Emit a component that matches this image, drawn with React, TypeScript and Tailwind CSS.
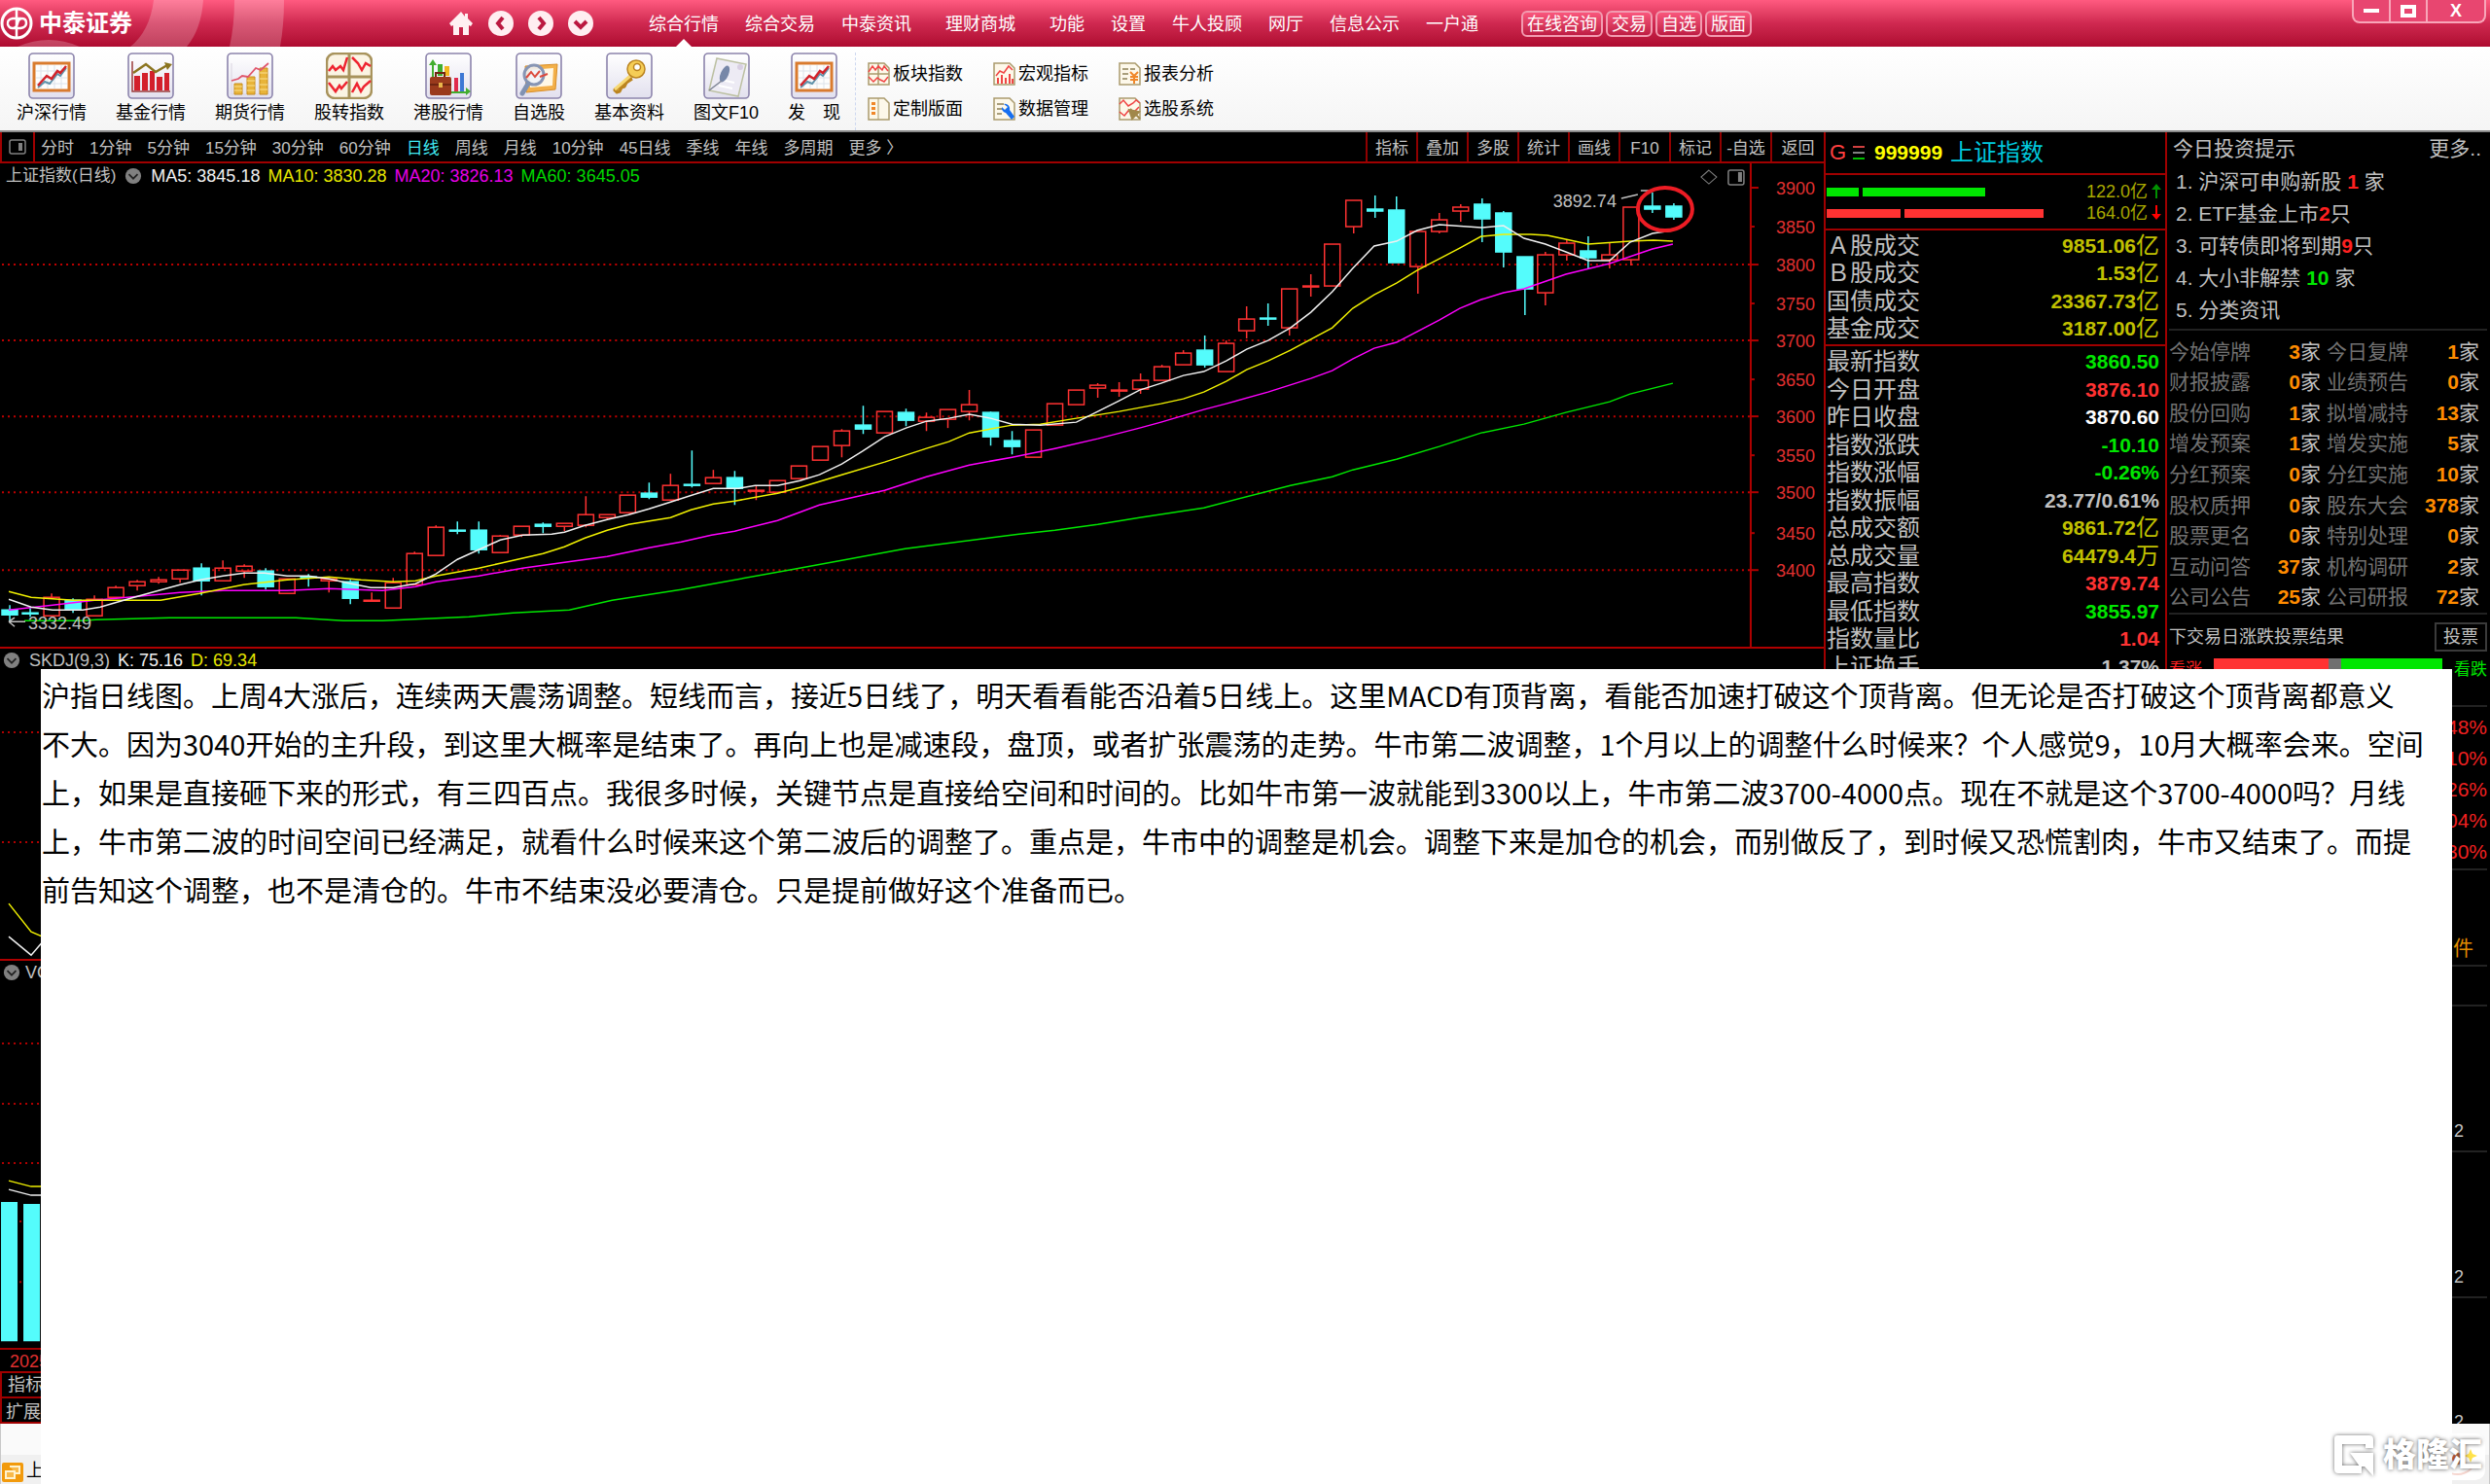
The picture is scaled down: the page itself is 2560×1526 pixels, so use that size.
import type { ReactNode } from "react";

const menus = [
  { name: "综合行情" },
  { name: "综合交易" },
  { name: "中泰资讯", wide: true },
  { name: "理财商城", wide: true },
  { name: "功能" },
  { name: "设置" },
  { name: "牛人投顾" },
  { name: "网厅" },
  { name: "信息公示" },
  { name: "一户通" },
];

const periods = ["分时", "1分钟", "5分钟", "15分钟", "30分钟", "60分钟", "日线", "周线", "月线", "10分钟", "45日线", "季线", "年线", "多周期", "更多 〉"];
const tools = ["指标", "叠加", "多股", "统计", "画线", "F10", "标记", "-自选", "返回"];

// [up, high, body top, body bottom, low]
const candles: [number, number, number, number, number][] = [
  [0, 454, 459, 464, 471], [0, 457, 462, 463, 466], [1, 442, 446, 465, 465], [0, 447, 449, 458, 462],
  [1, 444, 448, 465, 465], [1, 434, 436, 446, 446], [1, 428, 430, 434, 439], [1, 425, 428, 430, 432],
  [1, 418, 418, 427, 431], [0, 411, 416, 429, 444], [1, 408, 416, 429, 429], [1, 412, 414, 419, 426],
  [0, 416, 419, 435, 438], [1, 427, 427, 442, 442], [0, 422, 425, 426, 435], [1, 427, 427, 429, 441],
  [0, 428, 430, 447, 453], [1, 441, 449, 450, 450], [1, 426, 431, 457, 457], [1, 399, 401, 433, 433],
  [1, 372, 374, 403, 403], [0, 368, 377, 378, 381], [0, 368, 377, 397, 401], [1, 382, 383, 400, 400],
  [1, 373, 373, 382, 384], [0, 369, 371, 373, 380], [1, 370, 370, 373, 378], [1, 342, 361, 372, 374],
  [1, 361, 361, 364, 366], [1, 341, 341, 359, 359], [0, 328, 339, 343, 345], [1, 319, 331, 346, 346],
  [0, 295, 330, 331, 333], [1, 315, 323, 329, 329], [0, 316, 323, 334, 351], [1, 331, 336, 337, 346],
  [1, 326, 326, 338, 338], [1, 311, 311, 324, 324], [1, 291, 291, 305, 305], [1, 273, 275, 290, 302],
  [0, 249, 269, 273, 278], [1, 255, 255, 277, 277], [0, 252, 256, 264, 270], [1, 256, 261, 265, 275],
  [1, 253, 253, 263, 272], [1, 233, 248, 255, 264], [0, 255, 256, 281, 290], [0, 275, 285, 291, 299],
  [1, 274, 274, 302, 302], [1, 247, 247, 269, 269], [1, 233, 233, 248, 248], [1, 226, 228, 231, 241],
  [1, 225, 233, 234, 240], [1, 216, 223, 232, 237], [1, 207, 209, 223, 223], [1, 192, 195, 207, 207],
  [0, 177, 192, 207, 210], [1, 182, 185, 214, 214], [1, 147, 160, 172, 180], [0, 144, 159, 160, 167],
  [1, 129, 129, 169, 177], [1, 114, 126, 127, 137], [1, 83, 83, 126, 126], [1, 38, 38, 65, 72],
  [0, 33, 47, 49, 56], [0, 34, 48, 102, 102], [1, 70, 70, 106, 134], [1, 51, 58, 70, 72],
  [1, 42, 45, 49, 60], [0, 36, 42, 57, 81], [0, 49, 51, 91, 107], [0, 96, 96, 129, 156],
  [1, 91, 94, 133, 146], [1, 79, 82, 94, 100], [0, 75, 90, 97, 109], [1, 82, 94, 99, 108],
  [1, 45, 45, 99, 105], [0, 30, 44, 47, 51], [0, 41, 44, 55, 58],
];

const ma5 = "9,448 32,456 54,459 85,459 103,456 134,447 163,439 185,433 206,428 229,424 251,421 272,421 295,424 317,424 338,427 361,432 381,436 404,436 427,432 448,422 470,407 492,397 514,387 537,382 567,381 580,379 601,372 624,366 646,361 667,355 689,348 733,334 759,334 776,331 799,331 822,326 842,320 865,309 886,296 909,281 931,272 952,265 975,262 996,258 1018,262 1040,268 1069,269 1106,266 1128,255 1150,244 1171,233 1193,226 1216,218 1237,214 1260,203 1281,191 1303,182 1326,169 1347,153 1369,132 1390,108 1412,85 1435,80 1456,69 1479,63 1522,66 1545,64 1566,77 1588,83 1609,91 1632,100 1654,100 1675,81 1698,72 1719,69";
const ma10 = "9,440 32,446 76,449 165,449 205,442 250,433 295,428 338,425 371,428 404,430 427,429 448,424 492,416 514,411 558,401 580,394 601,385 624,377 646,371 689,364 710,356 733,350 755,347 799,339 822,333 865,320 909,307 952,293 975,286 996,277 1040,269 1069,268 1106,262 1150,255 1193,247 1216,242 1237,235 1260,224 1281,212 1303,203 1326,192 1369,169 1390,149 1412,135 1435,123 1456,110 1500,87 1522,75 1545,73 1573,73 1590,74 1632,83 1675,80 1699,79 1719,80";
const ma20 = "9,459 54,454 97,449 142,445 185,441 229,439 295,439 338,437 393,439 427,435 448,430 492,424 537,416 580,410 624,404 667,395 700,389 731,382 755,378 799,367 842,351 909,336 952,322 996,310 1040,302 1084,293 1128,283 1171,272 1193,266 1237,253 1260,247 1303,235 1347,221 1369,213 1390,201 1412,190 1435,184 1456,173 1479,161 1500,149 1522,140 1545,133 1566,129 1609,114 1654,103 1698,88 1719,83";
const ma60 = "25,470 85,470 98,469 174,467 304,467 353,470 393,470 437,468 482,466 527,462 585,459 629,449 700,438 816,417 930,396 1047,381 1084,377 1128,371 1171,364 1237,354 1326,331 1369,322 1390,315 1435,304 1479,291 1522,277 1566,268 1609,256 1654,245 1675,237 1719,226";

const axis: [string, number][] = [
  ["3900", 25], ["3850", 65], ["3800", 104], ["3750", 144], ["3700", 182], ["3650", 222],
  ["3600", 260], ["3550", 300], ["3500", 338], ["3450", 380], ["3400", 418],
];

const turnover = [
  ["Ａ股成交", "9851.06", "亿"],
  ["Ｂ股成交", "1.53", "亿"],
  ["国债成交", "23367.73", "亿"],
  ["基金成交", "3187.00", "亿"],
];

const quotes = [
  ["最新指数", "3860.50", "", "text-[#00e600]"],
  ["今日开盘", "3876.10", "", "text-[#ff3232]"],
  ["昨日收盘", "3870.60", "", "text-white"],
  ["指数涨跌", "-10.10", "", "text-[#00e600]"],
  ["指数涨幅", "-0.26%", "", "text-[#00e600]"],
  ["指数振幅", "23.77/0.61%", "", "text-[#c0c0c0]"],
  ["总成交额", "9861.72", "亿", "text-[#c0c000]"],
  ["总成交量", "64479.4", "万", "text-[#c0c000]"],
  ["最高指数", "3879.74", "", "text-[#ff3232]"],
  ["最低指数", "3855.97", "", "text-[#00e600]"],
  ["指数量比", "1.04", "", "text-[#ff3232]"],
  ["上证换手", "1.37%", "", "text-[#c0c0c0]"],
];

const events = [
  ["今始停牌", "3", "今日复牌", "1"],
  ["财报披露", "0", "业绩预告", "0"],
  ["股份回购", "1", "拟增减持", "13"],
  ["增发预案", "1", "增发实施", "5"],
  ["分红预案", "0", "分红实施", "10"],
  ["股权质押", "0", "股东大会", "378"],
  ["股票更名", "0", "特别处理", "0"],
  ["互动问答", "37", "机构调研", "2"],
  ["公司公告", "25", "公司研报", "72"],
];

const note = [
  "沪指日线图。上周4大涨后，连续两天震荡调整。短线而言，接近5日线了，明天看看能否沿着5日线上。这里MACD有顶背离，看能否加速打破这个顶背离。但无论是否打破这个顶背离都意义",
  "不大。因为3040开始的主升段，到这里大概率是结束了。再向上也是减速段，盘顶，或者扩张震荡的走势。牛市第二波调整，1个月以上的调整什么时候来？个人感觉9，10月大概率会来。空间",
  "上，如果是直接砸下来的形式，有三四百点。我很多时候，关键节点是直接给空间和时间的。比如牛市第一波就能到3300以上，牛市第二波3700-4000点。现在不就是这个3700-4000吗？月线",
  "上，牛市第二波的时间空间已经满足，就看什么时候来这个第二波后的调整了。重点是，牛市中的调整是机会。调整下来是加仓的机会，而别做反了，到时候又恐慌割肉，牛市又结束了。而提",
  "前告知这个调整，也不是清仓的。牛市不结束没必要清仓。只是提前做好这个准备而已。",
];

function Tile({ children }: { children: ReactNode }) {
  return (
    <svg viewBox="0 0 48 48" className="h-12 w-12">
      <defs>
        <linearGradient id="tile" x1="0" y1="0" x2="0" y2="1">
          <stop offset="0" stopColor="#fff" />
          <stop offset="1" stopColor="#e2e0ee" />
        </linearGradient>
      </defs>
      <rect x="1" y="1" width="46" height="46" rx="4" fill="url(#tile)" stroke="#8c84ac" strokeWidth="1.6" />
      {children}
    </svg>
  );
}

const framedChart = (
  <Tile>
    <rect x="6" y="11" width="36" height="28" fill="#fdfdfd" stroke="#d97b2e" strokeWidth="3" />
    <path d="M13 13v24M20 13v24M27 13v24M34 13v24M8 19h32M8 26h32M8 32h32" stroke="#dde3ea" />
    <path d="M10 36l7-6 5 2 8-10 3 2 6-8" fill="none" stroke="#5f93ab" strokeWidth="2" />
    <path d="M10 34l9-10 5 3 6-8 3 2 6-7" fill="none" stroke="#d2232a" strokeWidth="2.5" />
  </Tile>
);

const apps: { name: string; icon: ReactNode }[] = [
  { name: "沪深行情", icon: framedChart },
  {
    name: "基金行情",
    icon: (
      <Tile>
        <path d="M5 9v31h39" fill="none" stroke="#9b3b3b" strokeWidth="1.5" />
        <path d="M7 24h6v15H7zM15 21h6v18h-6zM23 19h5v20h-5zM30 25h6v14h-6zM38 21h5v18h-5z" fill="#d3202c" />
        <path d="M6 21l13-9 10 8 12-7" fill="none" stroke="#8b7420" strokeWidth="2.5" />
        <path d="M38 10l8 2-5 6z" fill="#8b7420" />
      </Tile>
    ),
  },
  {
    name: "期货行情",
    icon: (
      <Tile>
        <path d="M5 11v32h38" fill="none" stroke="#d9d4df" />
        <path d="M8 32h8v11H8zM21 25h8v18h-8zM34 16h8v27h-8z" fill="#e8b43a" stroke="#c88d1c" />
        <path d="M8 35h8M8 39h8M21 29h8M21 34h8M21 39h8M34 21h8M34 27h8M34 33h8M34 38h8" stroke="#fbe08e" />
        <path d="M5 29l7-2 4-3 6 1 8-9 5 2 8-7" fill="none" stroke="#e0566c" strokeWidth="1.8" />
      </Tile>
    ),
  },
  {
    name: "股转指数",
    icon: (
      <svg viewBox="0 0 48 48" className="h-12 w-12">
        <rect x="1" y="1" width="46" height="46" rx="8" fill="#fbf4e4" stroke="#a8935c" strokeWidth="2.5" />
        <path d="M24 1v46M1 25h46" stroke="#a8935c" strokeWidth="3" />
        <path d="M3 19l4-5 3 4 5-4 3 4 4-13M27 5l6 6 4 7 4-7 5 3M3 31l7 9 4-6 2 3 6-7M27 41l5-9 4 8 3-5 7-6" fill="none" stroke="#ee2430" strokeWidth="2.5" />
      </svg>
    ),
  },
  {
    name: "港股行情",
    icon: (
      <Tile>
        <path d="M8 44V10" stroke="#42ad2e" strokeWidth="2" />
        <path d="M4 13l4-6 4 6zM42 36l5 4-5 4z" fill="#42ad2e" />
        <path d="M13 12h5v12h-5z" fill="#3fae30" />
        <path d="M20 14h5v10h-5z" fill="#f2b51e" />
        <path d="M30 26h4v15h-4z" fill="#e02a4c" />
        <path d="M36 21h4v20h-4z" fill="#3d78d4" />
        <path d="M27 41h16" stroke="#42ad2e" strokeWidth="2" />
        <rect x="5" y="25" width="22" height="19" rx="2" fill="#9a3a1c" />
        <path d="M11 25v-4h9v4M5 33h22" fill="none" stroke="#6f2611" strokeWidth="2" />
        <path d="M14 31h4v5h-4z" fill="#e9b54a" />
      </Tile>
    ),
  },
  {
    name: "自选股",
    icon: (
      <Tile>
        <path d="M10 14l33-2-2 26-30 3z" fill="#f3b04a" stroke="#d98e27" />
        <path d="M14 18l25-2-1 18-23 2z" fill="#fff8e6" />
        <circle cx="19" cy="23" r="10" fill="#eef3fb" fillOpacity=".85" stroke="#8795b4" strokeWidth="3" />
        <path d="M11 26l5-6 4 5 5-6M25 25l8-3" fill="none" stroke="#dc4b3e" strokeWidth="2" />
        <path d="M13 32L7 42" stroke="#8192b2" strokeWidth="5" strokeLinecap="round" />
      </Tile>
    ),
  },
  {
    name: "基本资料",
    icon: (
      <Tile>
        <path d="M26 25L9 39v-1l2 3 3-1 2-4 3-1 2-4 6-4" fill="#f1c141" stroke="#bb8420" strokeWidth="3" strokeLinejoin="round" />
        <path d="M25 24L9 38" stroke="#f7d873" strokeWidth="3" />
        <circle cx="31" cy="17" r="9" fill="#f5cd56" stroke="#bb8420" strokeWidth="1.5" />
        <circle cx="32" cy="15" r="3.5" fill="#fff" stroke="#bb8420" strokeWidth="1.5" />
      </Tile>
    ),
  },
  {
    name: "图文F10",
    icon: (
      <Tile>
        <path d="M14 6l30 6-8 33-30-6z" fill="#edebf4" stroke="#bcc0a2" strokeWidth="1.5" />
        <path d="M18 28l14 3M16 34l14 3" stroke="#fff" strokeWidth="2" />
        <ellipse cx="22" cy="22" rx="4" ry="9" transform="rotate(24 22 22)" fill="#7787a8" />
        <path d="M19 29L6 39" stroke="#7e8494" strokeWidth="1.5" />
        <circle cx="38" cy="15" r="3" fill="#d8cfe2" />
      </Tile>
    ),
  },
  { name: "发　现", icon: framedChart },
];

function MiniBase({ children }: { children: ReactNode }) {
  return (
    <svg viewBox="0 0 24 24" className="h-6 w-6">
      <path d="M2 1h16l5 5v17H2z" fill="#fdf8ea" stroke="#ab9b6d" strokeWidth="1.5" />
      {children}
    </svg>
  );
}

const links: { name: string; icon: ReactNode }[] = [
  { name: "板块指数", icon: <MiniBase><path d="M12 1v22M2 12h21" stroke="#ab9b6d" strokeWidth="1.5" /><path d="M2 10l4-6 3 4 3-4 4 4 2-4 4 5M2 15l5 5 4-4 3 2 4 2 4-5" fill="none" stroke="#f04545" strokeWidth="1.5" /></MiniBase> },
  { name: "宏观指标", icon: <MiniBase><path d="M4 14l4-5 4 2 5-7 4 4" fill="none" stroke="#f04545" strokeWidth="1.5" /><path d="M6 22v-6M10 22v-9M14 22v-6M18 22V12M21 22v-5" stroke="#f04545" strokeWidth="2" /></MiniBase> },
  { name: "报表分析", icon: <MiniBase><path d="M5 7h6M13 7h5M5 12h6M5 17h5" stroke="#8d8057" strokeWidth="1.5" /><path d="M13 10l4 4 4-4M17 14v8M13 15h8M13 18h8" fill="none" stroke="#f0872a" strokeWidth="2" /></MiniBase> },
  { name: "定制版面", icon: <MiniBase><path d="M12 1v22" stroke="#ab9b6d" /><path d="M5 5h4v3H5zM5 10h4v3H5zM5 15h4v3H5z" fill="#f0872a" /></MiniBase> },
  { name: "数据管理", icon: <MiniBase><path d="M5 7h7M5 12h6M5 17h5" stroke="#8d8057" strokeWidth="1.5" /><path d="M12 7a5 5 0 0 1 6 6l5 7-3 3-6-7a5 5 0 0 1-4-6l3 3 3-3z" fill="#176ff0" /></MiniBase> },
  { name: "选股系统", icon: <MiniBase><path d="M2 7l4-4 5 6 5-3 3-3 4 3M2 15l5 4 4-5 5 2 6-6" fill="none" stroke="#f04545" strokeWidth="1.5" /><path d="M13 12l10 10M12 13l3 9 7-7z" stroke="#a1884a" strokeWidth="2" fill="#a1884a" /></MiniBase> },
];

function Fold() {
  return (
    <svg viewBox="0 0 20 20" className="h-[18px] w-5">
      <circle cx="10" cy="10" r="9" fill="#808080" />
      <path d="M5 8l5 5 5-5" fill="none" stroke="#222" strokeWidth="2" />
    </svg>
  );
}

function SidePanelIcon() {
  return (
    <svg viewBox="0 0 18 16" className="h-4 w-[18px]">
      <rect x="1" y="1" width="16" height="14" rx="2" fill="none" stroke="#808080" strokeWidth="1.5" />
      <path d="M10 4h4v8h-4z" fill="#808080" />
    </svg>
  );
}

function TitleBar() {
  return (
    <header className="relative flex h-12 items-center bg-linear-to-b from-[#ff5a80] via-[#cf2850] to-[#ae0a30] text-lg text-white">
      <svg viewBox="0 0 300 48" className="absolute left-0 top-0 h-12 w-[300px]">
        <path d="M158 0h51q-2 30-17 48h-58q20-16 24-48zM241 0h51q0 26-4 48h-52q5-22 5-48zM18 48q32-14 64 0z" fill="#fff" fillOpacity=".22" />
      </svg>
      <div className="relative flex w-[460px] items-center gap-1.5">
        <svg viewBox="0 0 34 34" className="h-[34px] w-[34px]">
          <g fill="none" stroke="#fff" strokeWidth="3">
            <circle cx="17" cy="17" r="15" />
            <path d="M17 2v30M22 12h-9q-6 1-5 6 1 4 5 4 4 0 5-5t5-5q4 0 4 5 0 4-6 5h-6" strokeWidth="2.5" />
          </g>
        </svg>
        <h1 className="text-2xl font-bold">中泰证券</h1>
      </div>
      <nav className="flex w-[207px] items-center gap-[13px]">
        <button aria-label="主页">
          <svg viewBox="0 0 28 28" className="h-7 w-7">
            <path d="M14 2L2 14l2 3 2-1v10h6v-8h4v8h6V16l2 1 2-3-5-5V4h-3v3z" fill="#fff0f2" />
          </svg>
        </button>
        {["M16 8l-5 6 5 6", "M12 8l5 6-5 6", "M8 12l6 6 6-6"].map((d, i) => (
          <button key={d} aria-label={["后退", "前进", "展开"][i]}>
            <svg viewBox="0 0 28 28" className="h-7 w-7">
              <circle cx="14" cy="14" r="13" fill="#ffeef1" />
              <path d={d} fill="none" stroke="#bb1840" strokeWidth="4" />
            </svg>
          </button>
        ))}
      </nav>
      <nav className="flex gap-[27px]">
        {menus.map((m, i) => (
          <button key={m.name} className={`relative flex h-12 items-center pt-0.5 ${m.wide ? "mr-2" : ""}`}>
            {m.name}
            {i === 0 && <span className="absolute bottom-0 left-1/2 h-0 w-0 -translate-x-1/2 border-x-8 border-b-8 border-x-transparent border-b-white" />}
          </button>
        ))}
      </nav>
      <div className="ml-11 flex gap-[3px]">
        {["在线咨询", "交易", "自选", "版面"].map((t) => (
          <button key={t} className="h-[27px] rounded-md border-2 border-[#f29bb0] bg-linear-to-b from-[#f9567c] to-[#bf1c44] px-1 leading-6">{t}</button>
        ))}
      </div>
      <div className="ml-auto mr-1 flex self-start rounded-b-lg border-2 border-t-0 border-[#f8a6b9] bg-[#e84670]">
        <button aria-label="最小化" className="flex h-[22px] w-9 items-center justify-center">
          <span className="h-1 w-4 bg-white" />
        </button>
        <button aria-label="还原" className="flex h-[22px] w-10 items-center justify-center border-x-2 border-[#f8a6b9]">
          <span className="h-[13px] w-4 border-4 border-white" />
        </button>
        <button aria-label="关闭" className="h-[22px] w-[58px] text-lg font-bold leading-5">X</button>
      </div>
    </header>
  );
}

function Toolbar() {
  return (
    <div className="flex h-[88px] border-b-2 border-[#8a8a8a] bg-linear-to-b from-white to-[#f5f5f5] text-lg text-black">
      <div className="flex pl-0.5 pt-1.5">
        {apps.map((a) => (
          <button key={a.name} className="flex flex-col items-center px-[15px]">
            {a.icon}
            <span className="leading-7">{a.name}</span>
          </button>
        ))}
      </div>
      <div className="mt-1.5 grid grid-cols-3 content-center gap-x-[30px] gap-y-2 border-l border-dashed border-[#cdd8f0] pl-[11px]">
        {links.map((l) => (
          <button key={l.name} className="flex items-center gap-[3px] leading-7">
            {l.icon}
            {l.name}
          </button>
        ))}
      </div>
    </div>
  );
}

function PeriodBar() {
  return (
    <div className="flex h-8 border-b-2 border-[#a00000] text-[17px] text-[#c0c0c0]">
      <button aria-label="侧栏" className="flex w-9 items-center justify-center border-x-2 border-[#a00000]"><SidePanelIcon /></button>
      <div className="flex items-center gap-4 pl-1.5 pt-1">
        {periods.map((p) => (
          <button key={p} className={p === "日线" ? "text-[#40e8f0]" : ""}>{p}</button>
        ))}
      </div>
      <div className="ml-auto flex">
        {tools.map((t) => (
          <button key={t} className="w-[52px] border-l-2 border-[#900000] pt-1 last:w-[55px]">{t}</button>
        ))}
      </div>
    </div>
  );
}

function KLine() {
  return (
    <div className="relative">
      <svg viewBox="0 0 1874 497" className="block w-full font-['Liberation_Sans',sans-serif]">
        <g stroke="#c00000" strokeWidth="2" strokeDasharray="2 4">
          {[104, 182, 260, 338, 418].map((y) => (
            <path key={y} d={`M2 ${y}H1798`} />
          ))}
        </g>
        <path d="M1799 0V497" stroke="#b00000" strokeWidth="2" />
        {axis.map(([t, y], i) => (
          <g key={t}>
            <path d={`M1799 ${y}h${i % 2 ? 4 : 8}`} stroke="#b00000" strokeWidth="2" />
            <text x="1825" y={y + 7} fontSize="18" fill="#e03030">{t}</text>
          </g>
        ))}
        {candles.map(([up, hi, top, bot, lo], i) => {
          const x = Math.round(9.5 + i * 21.93);
          const color = up ? "#ff3232" : "#54fcfc";
          return (
            <g key={i} stroke={color} strokeWidth="1.5">
              <path d={`M${x} ${hi}V${top}M${x} ${bot}V${lo}`} />
              <rect x={x - 8} y={top} width="16" height={bot - top} fill={up ? "none" : color} />
            </g>
          );
        })}
        <g fill="none" strokeWidth="1.5">
          <polyline points={ma60} stroke="#00e600" />
          <polyline points={ma20} stroke="#ff00ff" />
          <polyline points={ma10} stroke="#f0f000" />
          <polyline points={ma5} stroke="#f0f0f0" />
          <path d="M9 471h17M9 471l6-4M9 471l6 5M1666 36l17-4M1686 28h8" stroke="#c0c0c0" />
        </g>
        <text x="29" y="479" fontSize="18" fill="#c0c0c0">3332.49</text>
        <text x="1596" y="45" fontSize="18" fill="#c0c0c0">3892.74</text>
        <ellipse cx="1711" cy="47" rx="28" ry="22" fill="none" stroke="#ed1c24" strokeWidth="4" />
        <path d="M1756 7l8 7-8 7-8-7z" fill="none" stroke="#808080" />
        <rect x="1776" y="7" width="16" height="15" rx="2" fill="none" stroke="#808080" strokeWidth="1.5" />
        <path d="M1786 9h4v10h-4z" fill="#808080" />
      </svg>
      <div className="absolute left-1.5 top-0 flex h-[26px] items-center gap-2 text-lg">
        <span className="text-[17px] text-[#c0c0c0]">上证指数(日线)</span>
        <Fold />
        <span className="text-[#f0f0f0]">MA5: 3845.18</span>
        <span className="text-[#e6e600]">MA10: 3830.28</span>
        <span className="text-[#e600e6]">MA20: 3826.13</span>
        <span className="text-[#00d800]">MA60: 3645.05</span>
      </div>
    </div>
  );
}

function IndexPanel() {
  return (
    <section className="w-[353px] shrink-0 border-x-2 border-[#a00000] text-2xl text-[#c0c0c0]">
      <div className="flex h-11 items-center border-b-2 border-[#a00000] pl-1">
        <span className="w-6 text-[22px] text-[#ff4040]">G</span>
        <span className="mr-2.5 flex w-3 flex-col gap-1">
          <i className="h-0.5 bg-[#d04040]" />
          <i className="h-0.5 bg-[#808080]" />
          <i className="h-0.5 bg-[#00c000]" />
        </span>
        <b className="text-[21px] text-[#ffff00]">999999</b>
        <span className="pl-2 text-[#00c8dc]">上证指数</span>
      </div>
      <div className="h-[57px] border-b-2 border-[#a00000] py-1.5 pl-px pr-1 text-lg text-[#a8a800]">
        <div className="flex h-[22px] items-center gap-1">
          <i className="h-[9px] w-[33px] bg-[#00e600]" />
          <i className="h-[9px] w-[126px] bg-[#00e600]" />
          <span className="ml-auto">122.0亿</span>
          <svg viewBox="0 0 10 16" className="h-4 w-2.5"><path d="M5 0L0 6h4v9h2V6h4z" fill="#009000" /></svg>
        </div>
        <div className="flex h-[22px] items-center gap-1">
          <i className="h-[9px] w-[76px] bg-[#ff3232]" />
          <i className="h-[9px] w-[143px] bg-[#ff3232]" />
          <span className="ml-auto">164.0亿</span>
          <svg viewBox="0 0 10 16" className="h-4 w-2.5"><path d="M5 15L0 9h4V0h2v9h4z" fill="#ff0000" /></svg>
        </div>
      </div>
      <dl className="flex h-[119px] flex-col border-b-2 border-[#a00000] py-0.5 pl-px pr-1.5">
        {turnover.map(([name, value, unit]) => (
          <div key={name} className="flex flex-1 items-center justify-between leading-7">
            <dt>{name}</dt>
            <dd className="flex items-center text-[#c0c000]"><b className="text-[21px]">{value}</b>{unit}</dd>
          </div>
        ))}
      </dl>
      <dl className="flex h-[344px] flex-col pl-px pr-1.5 pt-0.5">
        {quotes.map(([name, value, unit, color]) => (
          <div key={name} className="flex flex-1 items-center justify-between leading-7">
            <dt>{name}</dt>
            <dd className={`flex items-center ${color}`}><b className="text-[21px]">{value}</b>{unit}</dd>
          </div>
        ))}
      </dl>
    </section>
  );
}

function InfoPanel() {
  return (
    <aside className="flex w-[332px] shrink-0 flex-col pl-0.5 pr-[3px] text-[21px] text-[#c0c0c0]">
      <div className="flex h-[34px] items-center justify-between pl-1 pr-1.5">
        <h2>今日投资提示</h2>
        <a href="#more">更多..</a>
      </div>
      <ol className="border-b-2 border-[#222] pb-[3px] pl-[7px] leading-[33px]">
        <li>1. 沪深可申购新股 <b className="text-[#ff2020]">1</b> 家</li>
        <li>2. ETF基金上市<b className="text-[#ff2020]">2</b>只</li>
        <li>3. 可转债即将到期<b className="text-[#ff2020]">9</b>只</li>
        <li>4. 大小非解禁 <b className="text-[#00e600]">10</b> 家</li>
        <li>5. 分类资讯</li>
      </ol>
      <div className="h-[292px] border-b-2 border-[#222] pt-1.5">
        <table className="h-[284px] w-full leading-7">
          <tbody>
            {events.map(([a, x, b, y]) => (
              <tr key={a}>
                <td className="w-[84px] whitespace-nowrap text-[#707070]">{a}</td>
                <td className="w-[72px] text-right"><b className="text-[#ff8c00]">{x}</b>家</td>
                <td className="w-[90px] whitespace-nowrap pl-1.5 text-[#707070]">{b}</td>
                <td className="whitespace-nowrap pr-2 text-right"><b className="text-[#ff8c00]">{y}</b>家</td>
              </tr>
            ))}
          </tbody>
        </table>
      </div>
      <div className="flex h-[45px] items-center justify-between text-lg">
        下交易日涨跌投票结果
        <button className="h-[30px] w-[54px] border-2 border-[#3a3a3a] leading-6">投票</button>
      </div>
      <div className="flex h-5 items-start gap-3 text-[17px] leading-6">
        <span className="text-[#ff2020]">看涨</span>
        <span className="flex h-4 flex-1">
          <i className="w-1/2 bg-[#ff3232]" />
          <i className="w-[13px] bg-[#707070]" />
          <i className="flex-1 bg-[#00e600]" />
        </span>
        <span className="text-[#00e600]">看跌</span>
      </div>
      <div className="mt-7 flex h-[170px] flex-col justify-center border-y-2 border-[#222] pt-1 text-right leading-8 text-[#f02020]">
        {["48%", "10%", "26%", "04%", "30%"].map((p) => (
          <span key={p}>{p}</span>
        ))}
      </div>
      <div className="flex h-[99px] items-end justify-end border-b-2 border-[#222] pb-0.5 pr-3.5 text-[#e08c00]">件</div>
      <div className="h-[41px] border-b-2 border-[#222]" />
      <div className="flex h-[150px] items-end justify-end border-b-2 border-[#222] pb-2 pr-6 text-lg leading-6">2</div>
      <div className="flex h-[150px] items-end justify-end border-b-2 border-[#222] pb-2 pr-6 text-lg leading-6">2</div>
      <div className="-mb-2 flex h-[137px] items-end justify-end pr-6 text-lg leading-5">2</div>
    </aside>
  );
}

function Watermark() {
  return (
    <div className="absolute bottom-2 right-2 flex items-center gap-2 text-[34px] font-black leading-10 text-white text-shadow-[0_0_4px_#555]">
      <svg viewBox="0 0 44 44" className="h-11 w-11 overflow-visible drop-shadow-[0_0_2px_#666]">
        <path d="M5 2h33q4 0 4 4v9h-8v-4H10v22h20v8H6q-4 0-4-4V5q0-3 3-3z" fill="#fff" />
        <path d="M18 20h24v24l-9-10h-5z" fill="#fff" />
      </svg>
      格隆汇
    </div>
  );
}

export default function App() {
  return (
    <div className="relative flex min-h-screen flex-col overflow-hidden bg-black font-['Liberation_Sans','Noto_Sans_CJK_SC',sans-serif]">
      <TitleBar />
      <Toolbar />
      <main className="flex flex-1">
        <div className="flex min-w-0 flex-1 flex-col">
          <PeriodBar />
          <KLine />
          <section className="h-[321px] border-t-2 border-[#b00000]">
            <div className="flex h-6 items-center gap-2 pl-0.5 text-lg leading-6 text-[#c0c0c0]">
              <Fold />
              <span>SKDJ(9,3)</span>
              <span className="text-[#f0f0f0]">K: 75.16</span>
              <span className="text-[#e6e600]">D: 69.34</span>
            </div>
            <svg viewBox="0 0 1874 295" className="block w-full" fill="none">
              <path d="M2 62H1798M2 175H1798" stroke="#b00000" strokeWidth="2" strokeDasharray="2 4" />
              <path d="M9 238l23 29 28 12" stroke="#f0f000" strokeWidth="1.5" />
              <path d="M9 272l23 19 24-28" stroke="#f0f0f0" strokeWidth="1.5" />
            </svg>
          </section>
          <section className="flex-1 border-t-2 border-[#b00000]">
            <div className="flex h-6 items-center gap-1 pl-0.5 text-lg leading-6 text-[#c0c0c0]">
              <Fold />
              VOL-TDX(5,10)
            </div>
            <svg viewBox="0 0 1874 372" className="block w-full" fill="none">
              <path d="M2 61H1798M2 123H1798M2 184H1798M2 244H1798M2 306H1798" stroke="#b00000" strokeWidth="2" strokeDasharray="2 4" />
              <path d="M9 202l23 6h28" stroke="#f0f000" strokeWidth="1.5" />
              <path d="M9 211l23 6h28" stroke="#f0f0f0" strokeWidth="1.5" />
              <path d="M1 224h17v143H1zM24 226h17v141H24z" fill="#54fcfc" />
            </svg>
          </section>
          <div className="h-6 border-t-2 border-[#a00000] pl-2.5 text-lg leading-6 text-[#e03030]">2025年</div>
          <div className="h-[26px] border-2 border-b-0 border-[#a00000] pl-1.5 text-lg leading-6 text-[#c0c0c0]">指标A</div>
          <div className="h-7 border-2 border-[#a00000] pl-1 text-lg leading-7 text-[#c0c0c0]">扩展∧</div>
        </div>
        <IndexPanel />
        <InfoPanel />
      </main>
      <footer className="relative h-[62px] border-x border-[#c8c8c8] bg-[#fafafa] pt-8">
        <div className="flex h-[30px] items-end gap-[3px] bg-[#f0f0f0] pb-0.5 text-lg leading-6 text-black">
          <svg viewBox="0 0 22 20" className="ml-px h-5 w-[22px]">
            <rect width="22" height="20" rx="2" fill="#f29a0c" />
            <path d="M8 4h10v7h-4M4 9h9v7H4z" fill="#f8b94a" stroke="#fff3cf" strokeWidth="2" />
          </svg>
          上证
          <svg viewBox="0 0 50 50" className="ml-auto mr-1 h-[50px] w-[50px]">
            <rect width="50" height="48" rx="10" fill="#fff" />
            <path d="M8 38q16 9 28-2" fill="none" stroke="#f6d6cf" strokeWidth="2" />
            <circle cx="22" cy="26" r="6" fill="#d3551f" />
            <path d="M35 16l2 5 5 2-5 2-2 5-2-5-5-2 5-2z" fill="#ffe24a" />
          </svg>
        </div>
      </footer>
      <article className="absolute bottom-0 left-[42px] right-[39px] top-[688px] overflow-hidden bg-white pl-px pt-px font-['Noto_Sans_CJK_SC',sans-serif] text-[29px] leading-[50px] text-black">
        {note.map((line) => (
          <p key={line} className="whitespace-nowrap">{line}</p>
        ))}
      </article>
      <Watermark />
    </div>
  );
}
